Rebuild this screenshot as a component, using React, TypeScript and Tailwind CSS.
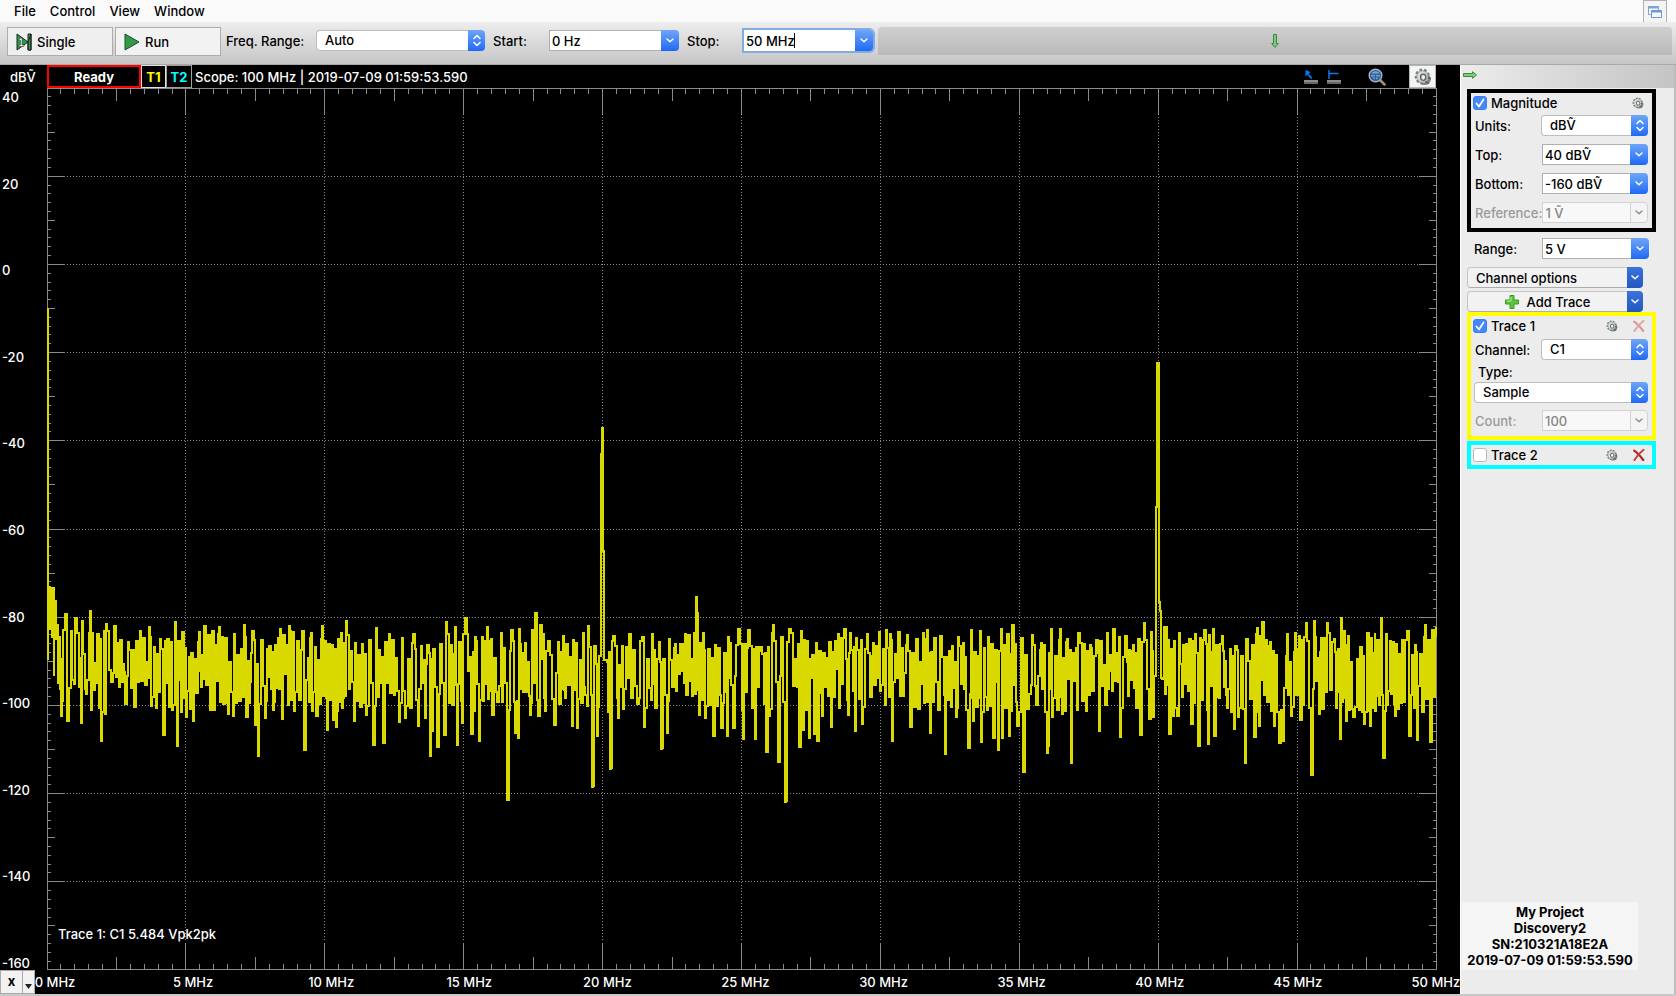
import React from "react";

const FREQ_LABELS = [0, 5, 10, 15, 20, 25, 30, 35, 40, 45, 50];
const DB_LABELS = [40, 20, 0, -20, -40, -60, -80, -100, -120, -140, -160];

/* Plot space: x 47..1436 is 0..50 MHz, y 88..970 is 40..-160 dB. */
const X0 = 47;
const Y0 = 88;
const W = 1390;
const H = 882;

/* Local maxima of the spectrum as x, y pairs. */
const CRESTS = [
  65, 614, 75, 618, 82, 621, 90, 611, 106, 624, 114, 626, 128, 642, 140, 631, 149, 627, 160, 639, 175, 622, 182, 632,
  199, 632, 204, 626, 212, 631, 219, 627, 234, 634, 244, 625, 252, 631, 261, 640, 280, 629, 289, 626, 302, 631, 311, 633,
  322, 626, 331, 645, 346, 621, 355, 643, 376, 628, 389, 634, 413, 634, 427, 645, 440, 644, 446, 622, 455, 627, 465, 618,
  475, 637, 487, 627, 511, 630, 519, 629, 535, 613, 540, 625, 543, 634, 548, 641, 563, 636, 573, 640, 583, 633, 588, 626,
  594, 646, 613, 636, 622, 646, 629, 634, 642, 637, 652, 634, 659, 642, 669, 639, 675, 644, 685, 634, 696, 597, 697, 613,
  703, 633, 715, 645, 728, 637, 738, 629, 748, 630, 760, 647, 773, 625, 789, 629, 801, 631, 816, 643, 838, 634, 844, 629,
  850, 633, 856, 638, 861, 640, 867, 634, 873, 643, 879, 632, 886, 630, 890, 634, 898, 632, 907, 635, 916, 639, 923, 633,
  927, 630, 940, 636, 958, 637, 971, 630, 980, 631, 988, 637, 1001, 629, 1012, 625, 1021, 638, 1032, 635, 1041, 643,
  1051, 629, 1060, 629, 1067, 639, 1078, 633, 1090, 645, 1096, 640, 1107, 633, 1113, 629, 1125, 636, 1133, 645, 1144, 623,
  1151, 632, 1164, 627, 1166, 627, 1174, 641, 1179, 633, 1189, 639, 1195, 634, 1204, 630, 1213, 629, 1222, 636, 1235, 646,
  1246, 639, 1257, 628, 1262, 622, 1270, 642, 1287, 634, 1295, 633, 1299, 636, 1306, 623, 1314, 621, 1321, 638, 1327, 623,
  1334, 639, 1341, 618, 1348, 636, 1360, 647, 1367, 633, 1375, 633, 1381, 618, 1393, 642, 1407, 631, 1415, 645, 1425, 625,
  1432, 630, 1436, 627,
];

/* Local minima of the spectrum as x, y pairs. */
const DIPS = [
  61, 716, 67, 721, 74, 684, 81, 723, 86, 694, 91, 710, 101, 741, 105, 714, 111, 682, 119, 687, 125, 704, 134, 707,
  145, 685, 151, 706, 156, 708, 163, 735, 172, 710, 177, 746, 181, 712, 186, 717, 193, 721, 201, 687, 210, 710, 214, 710,
  228, 714, 233, 716, 246, 717, 249, 703, 255, 725, 258, 756, 265, 718, 273, 710, 282, 719, 294, 711, 304, 750, 312, 711,
  316, 716, 327, 730, 333, 720, 336, 727, 342, 708, 354, 721, 366, 715, 373, 745, 383, 743, 394, 695, 399, 722, 405, 718,
  418, 726, 425, 718, 430, 756, 432, 731, 437, 747, 444, 735, 449, 703, 457, 745, 462, 723, 471, 734, 479, 741, 492, 715,
  497, 702, 507, 800, 515, 733, 518, 738, 530, 715, 538, 716, 545, 711, 554, 725, 559, 704, 565, 698, 572, 726, 577, 728,
  585, 695, 592, 787, 593, 786, 597, 736, 608, 712, 610, 769, 611, 768, 618, 718, 623, 709, 631, 698, 637, 704, 644, 727,
  651, 700, 661, 749, 662, 748, 667, 733, 676, 691, 686, 695, 692, 696, 699, 715, 705, 718, 713, 736, 721, 728, 727, 736,
  733, 728, 743, 739, 755, 739, 766, 752, 769, 716, 778, 762, 785, 802, 786, 801, 799, 747, 802, 730, 809, 738, 814, 734,
  817, 741, 822, 716, 831, 727, 848, 715, 855, 731, 862, 724, 870, 697, 880, 691, 885, 705, 892, 741, 903, 696, 910, 727,
  918, 709, 930, 733, 938, 710, 945, 754, 956, 717, 968, 748, 973, 721, 981, 742, 987, 710, 993, 738, 998, 750, 1002, 738,
  1009, 736, 1017, 726, 1023, 772, 1029, 694, 1036, 705, 1047, 753, 1048, 746, 1052, 717, 1057, 710, 1062, 714, 1071, 763,
  1077, 710, 1082, 701, 1086, 711, 1099, 731, 1105, 705, 1112, 691, 1120, 737, 1128, 696, 1140, 735, 1149, 719, 1153, 717,
  1162, 679, 1169, 734, 1173, 716, 1177, 716, 1191, 724, 1198, 746, 1208, 744, 1214, 736, 1219, 698, 1227, 708, 1234, 729,
  1238, 717, 1245, 763, 1254, 737, 1259, 726, 1274, 726, 1279, 743, 1282, 741, 1291, 716, 1300, 720, 1311, 775, 1319, 714,
  1322, 709, 1336, 708, 1340, 739, 1346, 721, 1353, 717, 1364, 724, 1370, 726, 1375, 711, 1383, 758, 1387, 705, 1395, 716,
  1409, 736, 1417, 740, 1422, 712, 1430, 742,
];

/* The 20 MHz and 40 MHz carriers as x, y pairs. */
const CARRIERS = [
  599, 656, 601, 454, 602, 428, 603, 551, 604, 552, 604, 660,
  1154, 676, 1156, 507, 1157, 363, 1159, 384, 1159, 602, 1160, 611, 1161, 612, 1161, 678,
];

/* Value of a piecewise-linear envelope at x. */
function envelope(list: number[], x: number) {
  let i = 0;
  while (i < list.length - 4 && list[i + 2] < x) i += 2;
  const t = Math.min(1, Math.max(0, (x - list[i]) / (list[i + 2] - list[i])));
  return list[i + 1] + t * (list[i + 3] - list[i + 1]);
}

function noisePath() {
  let seed = 7919;
  const rand = () => {
    seed = (seed * 16807) % 2147483647;
    return seed / 2147483647;
  };
  const points: [number, number][] = [];
  const taken = new Set<number>();
  const load = (list: number[]) => {
    for (let i = 0; i < list.length; i += 2) {
      points.push([list[i], list[i + 1]]);
      taken.add(list[i]);
    }
  };
  load(CRESTS);
  load(DIPS);
  load(CARRIERS);
  let high = true;
  for (let x = 60; x < 1436; x += rand() < 0.4 ? 1 : 2) {
    const carrier = (x > 598 && x < 607) || (x > 1153 && x < 1163);
    if (!taken.has(x) && !carrier) {
      const top = Math.max(626, envelope(CRESTS, x));
      const bottom = Math.min(720, envelope(DIPS, x));
      const spread = Math.sqrt(rand());
      points.push([x, high ? 668 - spread * (664 - top) : 668 + spread * (bottom - 676)]);
    }
    high = !high;
  }
  points.sort((a, b) => a[0] - b[0]);
  const [first, ...rest] = points;
  return `M${first[0]} ${first[1]}` + rest.map(([x, y]) => `H${x}V${Math.round(y)}`).join("");
}

const NOISE = noisePath();

function Scale() {
  const lines: string[] = [];
  const dotted: string[] = [];
  for (let i = 1; i < 100; i++) {
    const x = Math.floor((i * (W - 1)) / 100) + X0 + 0.5;
    const len = i % 10 === 0 ? 27 : i % 5 === 0 ? 13 : 6;
    lines.push(`M${x} ${Y0}v${len}M${x} ${Y0 + H}v-${len}`);
    if (i % 10 === 0) dotted.push(`M${x} ${Y0 + 29}V${Y0 + H - 28}`);
  }
  for (let i = 1; i < 100; i++) {
    const y = Math.floor((i * H) / 100) + Y0 + 0.5;
    const len = i % 10 === 0 ? 18 : i % 5 === 0 ? 8 : 4;
    lines.push(`M${X0} ${y}h${len}M${X0 + W} ${y}h-${len}`);
    if (i % 10 === 0) dotted.push(`M${X0 + 20} ${y}H${X0 + W - 19}`);
  }
  return (
    <g fill="none" stroke="#8a8a8a" strokeWidth="1" shapeRendering="crispEdges">
      <path d={lines.join("")} />
      <path d={dotted.join("")} strokeDasharray="1 2" />
      <rect x={X0 + 0.5} y={Y0 + 0.5} width={W - 1} height={H - 1} />
    </g>
  );
}

function Plot() {
  return (
    <svg className="absolute inset-0 h-full w-full" viewBox={`${X0} ${Y0} ${W} ${H}`} preserveAspectRatio="none" role="img" aria-label="Spectrum of trace 1">
      <Scale />
      <g fill="none" stroke="#d9d900" strokeWidth="2" shapeRendering="crispEdges">
        <path d="M48 308V660" />
        <path d="M50 586V630M52 587V638M54 587V676M56 600V640M58 624V684M60 636V690" />
        <path d={NOISE} />
        <path d="M602 430V552M1158 366V508" />
      </g>
    </svg>
  );
}

function Gear({ className }: { className: string }) {
  return (
    <svg className={className} viewBox="0 0 16 16" aria-hidden="true">
      <ellipse cx="9.4" cy="10" rx="5.600" ry="5.200" fill="#7d8386" />
      <ellipse cx="7.4" cy="7.600" rx="5.700" ry="6" fill="#c9cdce" stroke="#7b8184" strokeWidth="2.200" strokeDasharray="2.400 1.700" />
      <ellipse cx="7.400" cy="7.600" rx="4.800" ry="5" fill="#d5d9da" stroke="#979da0" strokeWidth=".6" />
      <ellipse cx="8.200" cy="8.300" rx="2.300" ry="2.700" fill="#f1f1f1" stroke="#5b6164" strokeWidth="1.300" />
      <path d="M10.500 12.300l2.800 1.500M12.500 8.800l2.400.5" stroke="#54595c" strokeWidth="1.200" />
    </svg>
  );
}

function Cross({ className }: { className: string }) {
  return (
    <svg className={className} viewBox="0 0 12 12" aria-hidden="true">
      <path d="M1.2 1.6C4.5 3.8 8 8 10.2 11" fill="none" stroke="#b02020" strokeWidth="2.2" strokeLinecap="round" />
      <path d="M10.6.8C7 3.6 3.5 7.6 1.4 11" fill="none" stroke="#c83c3c" strokeWidth="1.9" strokeLinecap="round" />
    </svg>
  );
}

function GreenArrow({ className }: { className: string }) {
  return (
    <svg className={className} viewBox="0 0 14 8" aria-hidden="true">
      <path d="M.5 2.5h9V.7L13.5 4 9.5 7.3V5.5h-9z" fill="#7fc97a" stroke="#3c8a3a" strokeWidth="1" strokeLinejoin="round" />
    </svg>
  );
}

function Down({ className }: { className: string }) {
  return (
    <svg className={className} viewBox="0 0 8 5" aria-hidden="true">
      <path d="M1 1l3 2.7L7 1" fill="none" stroke="currentColor" strokeWidth="1.5" strokeLinecap="round" strokeLinejoin="round" />
    </svg>
  );
}

function UpDown() {
  return (
    <span className="pointer-events-none flex w-[17px] shrink-0 items-center justify-center rounded-r bg-linear-to-b from-[#6ea5f7] to-[#1e68f6] text-white">
      <svg className="h-[13px] w-2" viewBox="0 0 8 13" aria-hidden="true">
        <path d="M1 4.5l3-3 3 3M1 8.5l3 3 3-3" fill="none" stroke="currentColor" strokeWidth="1.5" strokeLinecap="round" strokeLinejoin="round" />
      </svg>
    </span>
  );
}

function Select({ id, value, className }: { id: string; value: string; className: string }) {
  return (
    <span className={`flex h-[21px] ${className}`}>
      <select id={id} className="min-w-0 flex-1 appearance-none rounded-l border border-r-0 border-[#bdbdbd] bg-white pl-2 pb-px text-[13px] leading-4 font-medium outline-none">
        <option>{value}</option>
      </select>
      <UpDown />
    </span>
  );
}

function Combo({ id, value, disabled, className }: { id: string; value: string; disabled?: boolean; className: string }) {
  return (
    <span className={`flex h-[21px] ${className}`}>
      <input
        id={id}
        defaultValue={value}
        disabled={disabled}
        className={`min-w-0 flex-1 border border-r-0 pl-0.5 text-[13px] leading-4 font-medium outline-none ${disabled ? "border-[#d2d2d2] bg-[#f8f8f8] text-[#868686]" : "border-[#b0b0b0] bg-white"}`}
      />
      <button
        disabled={disabled}
        aria-label={`${id} presets`}
        className={`flex w-[18px] shrink-0 items-center justify-center rounded-r ${disabled ? "border border-[#d2d2d2] bg-[#f4f4f4] text-[#8f8f8f]" : "bg-linear-to-b from-[#6ea5f7] to-[#1e68f6] text-white"}`}
      >
        <Down className="h-[5px] w-2" />
      </button>
    </span>
  );
}

function Check({ label, checked }: { label: string; checked?: boolean }) {
  return (
    <label className="flex flex-1 items-center gap-1">
      <span className="grid size-[14px]">
        <input
          type="checkbox"
          defaultChecked={checked}
          className="peer col-start-1 row-start-1 size-[14px] appearance-none rounded-[3px] border border-[#b9b9b9] bg-white checked:border-[#3b7df5] checked:bg-[#4488f8]"
        />
        <svg className="pointer-events-none invisible col-start-1 row-start-1 size-[14px] peer-checked:visible" viewBox="0 0 14 14" aria-hidden="true">
          <path d="M3.5 7.5l2.5 3 4.5-7" fill="none" stroke="#fff" strokeWidth="1.7" strokeLinecap="round" strokeLinejoin="round" />
        </svg>
      </span>
      {label}
    </label>
  );
}

function SplitButton({ label, children, center }: { label: string; children?: React.ReactNode; center?: boolean }) {
  return (
    <div className="flex h-[21px] w-[176px]">
      <button className={`flex flex-1 items-center gap-2 rounded-l border border-r-0 border-[#c6c6c6] border-b-[#adadad] bg-[#f2f2f2] ${center ? "justify-center" : "pl-2"}`}>
        {children}
        {label}
      </button>
      <button aria-label={`${label} menu`} className="flex w-4 items-center justify-center rounded-r bg-linear-to-b from-[#3a73dc] to-[#2357bf] text-white">
        <Down className="h-[5px] w-2" />
      </button>
    </div>
  );
}

function Field({ id, label, dim, children }: { id: string; label: string; dim?: boolean; children: React.ReactNode }) {
  return (
    <div className="flex h-[21px] items-center justify-between">
      <label htmlFor={id} className={`whitespace-nowrap ${dim ? "text-[#9a9a9a]" : ""}`}>
        {label}
      </label>
      {children}
    </div>
  );
}

function Toolbar() {
  return (
    <div className="flex h-[43px] items-start border-b border-[#a9a9a9] bg-linear-to-b from-[#ededed] to-[#c6c6c6] pt-[5px] pr-1 pl-[7px]">
      <button className="flex h-[29px] w-[106px] items-center gap-[5px] border border-[#adadad] bg-[#efefef] pl-2">
        <svg className="h-[18px] w-4" viewBox="0 0 16 18" aria-hidden="true">
          <path d="M1 1l11 8L1 17z" fill="#2f9a47" stroke="#222" strokeWidth="1" />
          <path d="M15 1v16h-3V9zM12 1h3v16h-3z" fill="#2f9a47" stroke="#222" strokeWidth="1" />
          <path d="M2.5 7l2-2H6v7h2v1.500H2.800V12h1.700V7.200z" fill="#fff" stroke="#222" strokeWidth=".5" />
        </svg>
        Single
      </button>
      <button className="ml-0.5 flex h-[29px] w-[106px] items-center gap-[5px] border border-[#adadad] bg-[#f2f2f2] pl-2">
        <svg className="h-[18px] w-4" viewBox="0 0 16 18" aria-hidden="true">
          <path d="M1 1l14 8L1 17z" fill="#2f9a47" stroke="#1d4d28" strokeWidth="1" />
        </svg>
        Run
      </button>
      <div className="ml-[5px] flex h-[27px] items-center">
        <label htmlFor="span" className="w-[90px]">Freq. Range:</label>
        <Select id="span" value="Auto" className="w-[169px]" />
        <label htmlFor="start" className="ml-2 w-14">Start:</label>
        <Combo id="start" value="0 Hz" className="w-[130px]" />
        <label htmlFor="stop" className="ml-2 w-[57px]">Stop:</label>
        <span className="flex h-[21px] w-[129px] rounded-r ring-2 ring-[#80ace6]">
          <span className="flex flex-1 items-center bg-white pl-0.5">
            <input id="stop" defaultValue="50 MHz" className="w-[48px] text-[13px] leading-4 font-medium outline-none" />
            <span className="h-[15px] w-px bg-black" />
          </span>
          <button aria-label="stop presets" className="flex w-[18px] items-center justify-center rounded-r bg-linear-to-b from-[#6ea5f7] to-[#1e68f6] text-white">
            <Down className="h-[5px] w-2" />
          </button>
        </span>
      </div>
      <div className="ml-[5px] flex h-7 flex-1 items-center justify-center rounded-t bg-linear-to-b from-[#cfcfcf] to-[#b9b9b9]">
        <GreenArrow className="h-2 w-[14px] rotate-90" />
      </div>
    </div>
  );
}

function ChartHeader() {
  return (
    <div className="flex h-[23px] items-stretch pr-6 text-white">
      <span className="flex w-[47px] items-center pl-2.5">dBṼ</span>
      <span className="flex w-[94px] items-center justify-center border-2 border-[#f00] font-bold">Ready</span>
      <button className="w-[25px] border border-[#e0e0e0] font-bold text-[#ff0]">T1</button>
      <button className="w-[26px] border border-[#a0a0a0] font-bold text-[#0ff]">T2</button>
      <span className="flex flex-1 items-center pl-[3px]">Scope: 100 MHz | 2019-07-09 01:59:53.590</span>
      <div className="flex items-center">
        <button aria-label="Quick cursor">
          <svg className="h-4 w-[14px]" viewBox="0 0 14 16" aria-hidden="true">
            <path d="M1.500 1v6.500l1.800-1.700L7 10l1.500-1.500-4-3.500L6.500 3z" fill="#0a7af0" />
            <path d="M0 11h14v4H0z" fill="#666" />
            <path d="M.5 12h13" stroke="#b5b5b5" strokeWidth="2" strokeDasharray="1 1" />
          </svg>
        </button>
        <button aria-label="Quick measurement" className="ml-[9px]">
          <svg className="h-4 w-[14px]" viewBox="0 0 14 16" aria-hidden="true">
            <path d="M2 1v9M2 4.500h9.500" stroke="#0a7af0" strokeWidth="1.500" />
            <path d="M0 11h14v4H0z" fill="#666" />
            <path d="M.5 12h13" stroke="#b5b5b5" strokeWidth="2" strokeDasharray="1 1" />
          </svg>
        </button>
        <button aria-label="Zoom" className="ml-[27px]">
          <svg className="h-[18px] w-[18px]" viewBox="0 0 18 18" aria-hidden="true">
            <path d="M12 12l4.500 4.500" stroke="#a58f7f" strokeWidth="2.500" strokeLinecap="round" />
            <circle cx="7.500" cy="7.500" r="6.300" fill="#2f5f9a" stroke="#aab4be" strokeWidth="1.400" />
            <path d="M3.500 5.500a4.300 3.500 0 0 1 8 0z" fill="#7fa8d4" />
            <path d="M3 7h4v1.500H3zM8 7h4v1.500H8zM4 9.500h3v2zM8 9.500h3l-3 2z" fill="#6f9ed0" />
          </svg>
        </button>
      </div>
      <button aria-label="Plot settings" className="ml-[23px] flex w-[27px] items-center justify-center border border-[#b5b5b5] bg-[#f4f4f4]">
        <Gear className="size-[18px]" />
      </button>
    </div>
  );
}

function Sidebar() {
  return (
    <aside className="flex w-[216px] shrink-0 flex-col border-r-2 border-l border-r-[#bdbdbd] border-l-white bg-[#ececec]">
      <div className="flex h-[23px] items-center bg-linear-to-r from-[#ececec] to-[#c4c4c4] pb-[3px] pl-0.5">
        <GreenArrow className="h-2 w-[14px]" />
      </div>
      <div className="mt-px flex flex-1 flex-col pl-1.5">
        <section className="w-[189px] border-4 border-black px-1 pt-[3px] pb-[5px]">
          <div className="-ml-0.5 flex h-[14px] items-center pr-1">
            <Check label="Magnitude" checked />
            <button aria-label="Magnitude settings"><Gear className="size-3" /></button>
          </div>
          <div className="mt-[5px] flex flex-col gap-2">
            <Field id="units" label="Units:"><Select id="units" value="dBṼ" className="w-[107px]" /></Field>
            <Field id="top" label="Top:"><Combo id="top" value="40 dBṼ" className="w-[106px]" /></Field>
            <Field id="bottom" label="Bottom:"><Combo id="bottom" value="-160 dBṼ" className="w-[106px]" /></Field>
            <Field id="reference" label="Reference:" dim><Combo id="reference" value="1 Ṽ" disabled className="w-[106px]" /></Field>
          </div>
        </section>
        <div className="mt-1.5 w-[182px] pl-[7px]">
          <Field id="range" label="Range:"><Combo id="range" value="5 V" className="w-[107px]" /></Field>
        </div>
        <div className="mt-2 flex flex-col gap-[3px]">
          <SplitButton label="Channel options" />
          <SplitButton label="Add Trace" center>
            <svg className="size-[14px]" viewBox="0 0 14 14" aria-hidden="true">
              <path d="M5 .5h4V5h4.500v4H9v4.500H5V9H.5V5H5z" fill="#5fc43c" stroke="#3f9a26" strokeWidth="1" strokeLinejoin="round" />
              <path d="M6 2v4H2" fill="none" stroke="#b5eb9c" strokeWidth="1" />
            </svg>
          </SplitButton>
        </div>
        <section className="w-[189px] border-4 border-[#ff0] px-1 pt-[3px] pb-[5px]">
          <div className="-ml-0.5 flex h-[14px] items-center gap-[15px] pr-[3px]">
            <Check label="Trace 1" checked />
            <button aria-label="Trace 1 settings"><Gear className="size-3" /></button>
            <button disabled aria-label="Remove trace 1" className="opacity-40"><Cross className="size-3" /></button>
          </div>
          <div className="mt-1.5 flex flex-col">
            <Field id="channel" label="Channel:"><Select id="channel" value="C1" className="w-[107px]" /></Field>
            <label htmlFor="type" className="mt-1 ml-[3px] h-[18px] leading-4">Type:</label>
            <Select id="type" value="Sample" className="-ml-px" />
            <div className="mt-[7px]">
              <Field id="count" label="Count:" dim><Combo id="count" value="100" disabled className="w-[106px]" /></Field>
            </div>
          </div>
        </section>
        <section className="mt-px w-[189px] border-4 border-[#0ff] px-1 py-[3px]">
          <div className="-ml-0.5 flex h-[14px] items-center gap-[15px] pr-[3px]">
            <Check label="Trace 2" />
            <button aria-label="Trace 2 settings"><Gear className="size-3" /></button>
            <button aria-label="Remove trace 2"><Cross className="size-3" /></button>
          </div>
        </section>
      </div>
      <div className="mb-6 ml-px w-[176px] bg-[#f5f5f5] py-0.5 text-center leading-4 font-bold whitespace-nowrap">
        <p>My Project</p>
        <p>Discovery2</p>
        <p>SN:210321A18E2A</p>
        <p>2019-07-09 01:59:53.590</p>
      </div>
    </aside>
  );
}

export default function App() {
  return (
    <div className="flex min-h-screen flex-col bg-[#ececec] font-['Inter',sans-serif] text-[13px] leading-4 font-medium text-black">
      <nav className="flex h-[22px] items-center bg-[#fafafa] pr-[9px] pl-[14px]">
        <div className="flex flex-1 gap-[14px]">
          <button>File</button>
          <button>Control</button>
          <button>View</button>
          <button>Window</button>
        </div>
        <button aria-label="Windows" className="flex h-full w-6 items-center justify-center border border-b-0 border-[#b0b0b0] bg-[#f4f4f4]">
          <svg className="size-[14px]" viewBox="0 0 14 14" aria-hidden="true">
            <path d="M.5 1.500h10v8H.5z" fill="#f4f8fd" stroke="#7da3d6" />
            <path d="M.5 1.500h10v2H.5z" fill="#7da3d6" />
            <path d="M3.500 5.500h10v7h-10z" fill="#f2f7fd" stroke="#6e97cf" />
            <path d="M3.500 5.500h10v2h-10z" fill="#6e97cf" />
          </svg>
        </button>
      </nav>
      <Toolbar />
      <main className="flex flex-1 border-b-2 border-[#c8c8c8]">
        <div className="flex min-w-0 flex-1 flex-col bg-black">
          <ChartHeader />
          <div className="flex flex-1 pr-[23px] text-white">
            <div className="-mb-px flex w-[47px] flex-col justify-between pt-px pl-0.5">
              {DB_LABELS.map((v) => (
                <span key={v}>{v}</span>
              ))}
            </div>
            <div className="relative flex flex-1 items-end">
              <Plot />
              <p className="relative mb-7 pl-[11px]">Trace 1: C1 5.484 Vpk2pk</p>
            </div>
          </div>
          <div className="flex h-6 items-center text-white">
            <div className="flex h-full w-[31px] shrink-0 text-black">
              <button className="w-[23px] shrink-0 border border-[#aaa] bg-[#f2f2f2] pb-0.5 font-bold">x</button>
              <button aria-label="Axis menu" className="flex w-3 shrink-0 items-end justify-center border border-l-0 border-[#aaa] bg-[#f2f2f2] pb-1">
                <svg className="h-[5px] w-[7px]" viewBox="0 0 7 5" aria-hidden="true"><path d="M0 0h7L3.500 5z" fill="#222" /></svg>
              </button>
            </div>
            <div className="flex min-w-0 flex-1 justify-between">
              {FREQ_LABELS.map((v) => (
                <span key={v} className="flex w-12 justify-center whitespace-nowrap">{v} MHz</span>
              ))}
            </div>
          </div>
        </div>
        <Sidebar />
      </main>
    </div>
  );
}
